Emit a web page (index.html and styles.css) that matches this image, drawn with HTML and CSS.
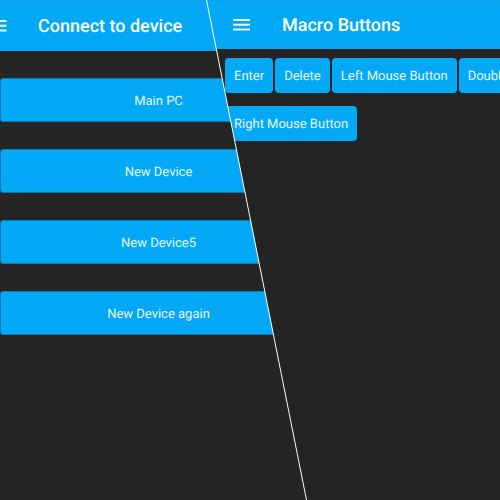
FILE: index.html
```html
<!DOCTYPE html>
<html lang="en">
<head>
<meta charset="utf-8">
<title>Macro Buttons</title>
<link rel="stylesheet" href="styles.css">
</head>
<body>
<main class="split">
  <section class="pane devices">
    <header class="bar">
      <button class="menu" type="button" aria-label="Menu">
        <svg width="7" height="12" viewBox="0 0 7 12"><path d="M0 1h6.5M0 5.7h6.5M0 10.4h6.5"/></svg>
      </button>
      <h1>Connect to device</h1>
    </header>
    <div class="device-list">
      <button type="button">Main PC</button>
      <button type="button">New Device</button>
      <button type="button">New Device5</button>
      <button type="button">New Device again</button>
    </div>
  </section>
  <section class="pane macros">
    <header class="bar">
      <button class="menu" type="button" aria-label="Menu">
        <svg width="17" height="12" viewBox="0 0 17 12"><path d="M0 1h17M0 5.7h17M0 10.4h17"/></svg>
      </button>
      <h1>Macro Buttons</h1>
    </header>
    <div class="macro-list">
      <div class="macro-row">
        <button type="button">Enter</button>
        <button type="button">Delete</button>
        <button type="button">Left Mouse Button</button>
        <button type="button">Double</button>
      </div>
      <div class="macro-row">
        <button type="button">Right Mouse Button</button>
      </div>
    </div>
  </section>
  <svg class="divider" viewBox="0 0 100 100" preserveAspectRatio="none" aria-hidden="true">
    <line x1="41.3" y1="0" x2="61.3" y2="100"/>
  </svg>
</main>
</body>
</html>
```
FILE: styles.css
```css
* {
  box-sizing: border-box;
}

body {
  margin: 0;
  background: #242424;
  color: #fff;
  font-family: Roboto, "Liberation Sans", sans-serif;
  text-rendering: geometricPrecision;
}

button {
  margin: 0;
  padding: 0;
  border: 0;
  color: #e3f6ff;
  background: #03a9f7;
  font: inherit;
  text-rendering: inherit;
}

/* Both panes share one grid cell; the second is cut along the divider. */
.split {
  position: relative;
  display: grid;
  grid-template-columns: minmax(0, 1fr);
  min-height: 100vh;
  overflow: hidden;
}

.pane {
  grid-area: 1 / 1;
  min-width: 0;
  background: #242424;
}

.bar {
  display: flex;
  align-items: center;
  height: 51px;
  background: #03a9f7;
  border-top: 1px solid #1c9cd8;
}

.bar h1 {
  margin: 0;
  padding-top: 2px;
  font-size: 18px;
  line-height: 24px;
  font-weight: 500;
  white-space: nowrap;
}

.menu {
  display: flex;
}

.menu svg {
  display: block;
  fill: none;
  stroke: #e8f7ff;
  stroke-width: 2;
}

.devices .bar {
  gap: 31px;
}

.device-list {
  display: flex;
  flex-direction: column;
  gap: 27px;
  width: 63.4%;
  padding-top: 27px;
}

.device-list button {
  height: 44px;
  padding-top: 3px;
  border: 1px solid #087bb2;
  border-radius: 3px;
  font-size: 13px;
}

.macros {
  clip-path: polygon(41.3% 0, 100% 0, 100% 100%, 61.3% 100%);
}

.macros .bar {
  gap: 32px;
  height: 49px;
  padding-left: 46.6%;
}

.macro-list {
  display: flex;
  flex-direction: column;
  gap: 13px;
  padding: 9px 0 0 45%;
}

.macro-row {
  display: flex;
  gap: 2px;
}

.macro-row button {
  flex: none;
  height: 35px;
  padding: 1px 9px 0;
  border-radius: 4px;
  font-size: 13px;
  white-space: nowrap;
}

.divider {
  position: absolute;
  inset: 0;
  width: 100%;
  height: 100%;
  pointer-events: none;
}

.divider line {
  stroke: #fff;
  stroke-width: 1;
  vector-effect: non-scaling-stroke;
}
```
